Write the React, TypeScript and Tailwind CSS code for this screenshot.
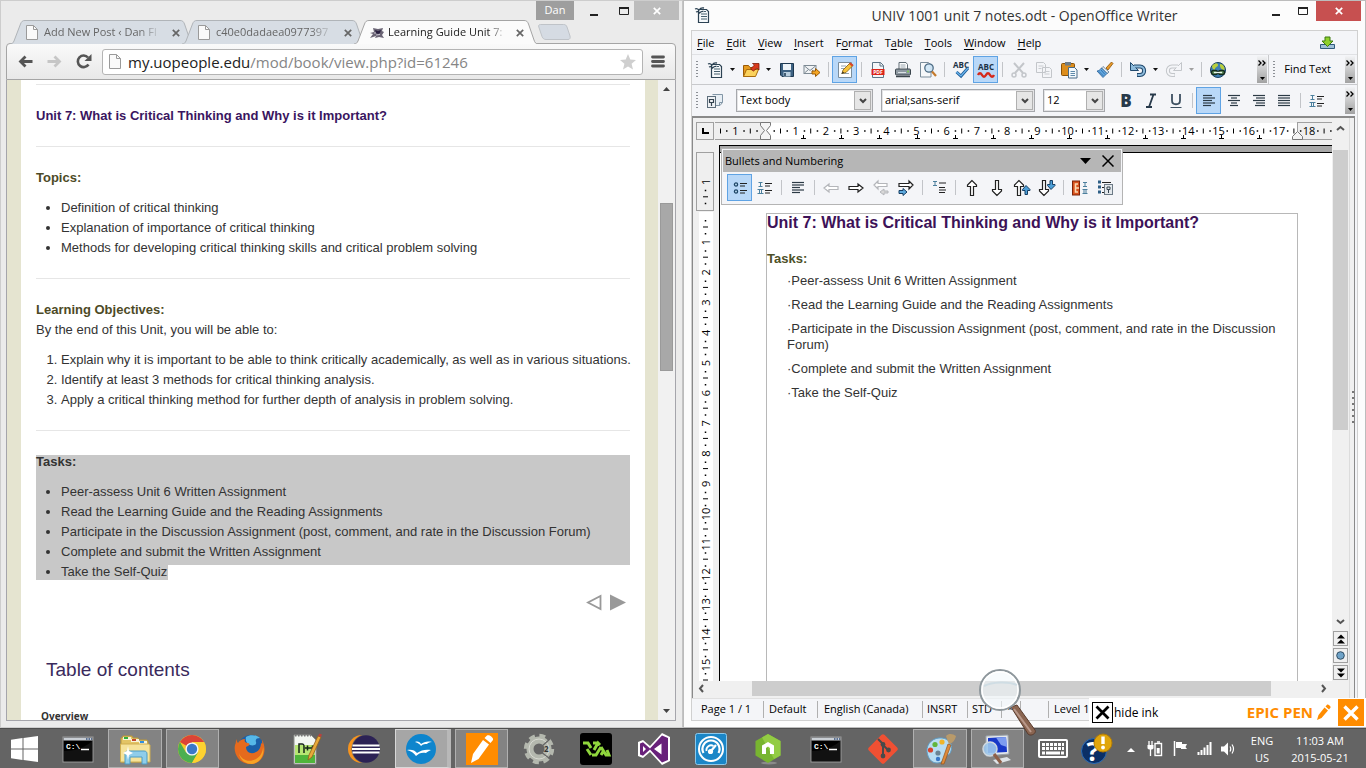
import type { ReactNode } from "react";

type Kids = { children?: ReactNode };

/* ---------- shared pieces ---------- */

function PageIcon() {
  return (
    <svg width="12" height="15" viewBox="0 0 12 15" className="shrink-0">
      <path d="M.5.5h7l4 4v10H.5z" fill="#fafafa" stroke="#9a9a9a" />
      <path d="M7.5.5v4h4" fill="none" stroke="#9a9a9a" />
    </svg>
  );
}

function Caret({ dim = false }: { dim?: boolean }) {
  return (
    <button aria-label="More options" className="flex h-[27px] w-[11px] shrink-0 items-center justify-center">
      <svg width="5" height="3">
        <path d="M0 0h5L2.5 3z" fill={dim ? "#a0a0a0" : "#111"} />
      </svg>
    </button>
  );
}

function Sep() {
  return <span className="flex h-[15px] w-2 shrink-0 justify-center before:w-px before:bg-[#c2c4c8]" />;
}

function Grip() {
  return (
    <svg width="2" height="18" className="ml-1 shrink-0">
      <path d="M1 0v18" stroke="#8c9096" strokeWidth="2" strokeDasharray="1 2" />
    </svg>
  );
}

function Tool({ label, on = false, children }: Kids & { label: string; on?: boolean }) {
  return (
    <button
      aria-label={label}
      className={
        on
          ? "flex h-[27px] w-[25px] shrink-0 items-center justify-center border border-[#5fa3e4] bg-[#b9d8f8]"
          : "flex h-[27px] w-[25px] shrink-0 items-center justify-center"
      }
    >
      <svg width="18" height="18" viewBox="0 0 18 18" className="shrink-0">
        {children}
      </svg>
    </button>
  );
}

function Overflow() {
  return (
    <button
      aria-label="More tools"
      className="flex h-[27px] w-[10px] shrink-0 flex-col items-center justify-between bg-linear-to-b from-[#f2f3f5] to-[#a2a2a2] pt-1 pb-[3px]"
    >
      <svg width="8" height="6">
        <path d="M.5 .5l2.5 2.5-2.5 2.5M4.5 .5l2.5 2.5-2.5 2.5" fill="none" stroke="#000" strokeWidth="1.3" />
      </svg>
      <svg width="5" height="3">
        <path d="M0 0h5L2.5 3z" />
      </svg>
    </button>
  );
}

/* ---------- browser ---------- */

function Tab({ title, active = false, icon }: { title: string; active?: boolean; icon: ReactNode }) {
  return (
    <div className={active ? "relative z-10 -mr-3 h-6 w-[184px]" : "relative -mr-3 h-6 w-[184px]"}>
      <svg className="absolute inset-0" width="184" height="24">
        <path
          d="M0 24c2 0 3-1 4-3L10.5 4C11.5 1.5 12.5.5 15 .5h155c2.5 0 3.5 1 4.500 3.500L180 20c.8 2.500 2 4 4 4"
          fill={active ? "#fbfbfb" : "#d7dde4"}
          stroke={active ? "#a4a4a4" : "#b0b4b8"}
        />
      </svg>
      <div className="relative flex h-6 items-center pt-px pr-[14px] pl-4">
        <span className="flex w-[18px] shrink-0">{icon}</span>
        <span
          className={
            active
              ? "w-[118px] overflow-hidden text-[11px] whitespace-nowrap text-[#222] [mask-image:linear-gradient(90deg,#000_85%,transparent)]"
              : "w-[118px] overflow-hidden text-[11px] whitespace-nowrap text-[#666] [mask-image:linear-gradient(90deg,#000_80%,transparent)]"
          }
        >
          {title}
        </span>
        <button aria-label="Close tab" className="ml-auto flex">
          <svg width="8" height="8">
            <path d="M.8.8l6.400 6.400M7.200.8L.8 7.200" stroke="#666" strokeWidth="1.700" />
          </svg>
        </button>
      </div>
    </div>
  );
}

function Rule() {
  return <hr className="h-[2px] border-0 border-t border-[#e6e6e6]" />;
}

function Browser() {
  return (
    <section className="flex min-h-0 min-w-0 flex-col border border-[#cdcdcd] border-r-[#c4c4c4] bg-[#ebebeb] pr-[6px] pb-[6px] pl-[5px]">
      <header>
        <div className="flex h-[19px] justify-end">
          <span className="flex w-[38px] items-center justify-center bg-[#9e9e9e] text-[11px] text-white">Dan</span>
          <button aria-label="Minimize" className="flex w-10 items-center justify-center pt-2">
            <svg width="8" height="2">
              <path d="M0 1h8" stroke="#222" strokeWidth="2" />
            </svg>
          </button>
          <button aria-label="Maximize" className="flex w-5 items-center justify-center">
            <svg width="10" height="8">
              <path d="M.5 1v6.500h9V1" fill="none" stroke="#222" />
              <path d="M0 1h10" stroke="#222" strokeWidth="2" />
            </svg>
          </button>
          <button aria-label="Close" className="-mr-[3px] flex w-[45px] items-center justify-center bg-[#bcbcbc]">
            <svg width="8" height="8">
              <path d="M.8.8l6.400 6.400M7.200.8L.8 7.200" stroke="#fff" strokeWidth="1.700" />
            </svg>
          </button>
        </div>
        <div className="relative z-10 -mb-px flex pl-1">
          <Tab title="Add New Post ‹ Dan Fl" icon={<PageIcon />} />
          <Tab title="c40e0dadaea0977397" icon={<PageIcon />} />
          <Tab
            title="Learning Guide Unit 7:"
            active
            icon={
              <svg width="15" height="12" viewBox="0 0 15 12">
                <path d="M3 1l5 1 5-1-1 3 2 1-2 3 2 3-5-1-4 1 1-2-6 2 3-4-3-1 4-1z" fill="#6a6474" />
                <path d="M5 3l3 1 3-1-1 3-2 1-2-1z" fill="#2a2140" />
                <path d="M6 8l4-.5M4 6h2" stroke="#c9c4d2" />
              </svg>
            }
          />
          <button aria-label="New tab" className="ml-3 flex items-center pb-px">
            <svg width="33" height="16">
              <path d="M2.500.5h23c2 0 2.700.6 3.500 2.500l3 9c.6 2-.2 3.500-2 3.500H8c-2 0-3-.8-4-3L.8 3C.3 1.500.8.5 2.500.5z" fill="#d5dbe3" stroke="#bfc3c8" />
            </svg>
          </button>
        </div>
      </header>
      <div className="flex h-[37px] shrink-0 items-center rounded-t-[4px] border border-[#a5a5a5] bg-linear-to-b from-[#fafafa] to-[#e8e8e8] pr-[10px] pl-[11px]">
        <button aria-label="Back" className="flex w-[29px]">
          <svg width="15" height="13">
            <path d="M14.500 6.500H3M7.500 1.500l-5 5 5 5" fill="none" stroke="#555" strokeWidth="2.800" />
          </svg>
        </button>
        <button aria-label="Forward" className="flex w-[29px]">
          <svg width="15" height="13">
            <path d="M.5 6.500H12M7.500 1.500l5 5-5 5" fill="none" stroke="#c6c6c6" strokeWidth="2.800" />
          </svg>
        </button>
        <button aria-label="Reload" className="flex w-[26px]">
          <svg width="16" height="15">
            <path d="M12.500 10.500A5.800 5.800 0 1 1 12 3.500" fill="none" stroke="#555" strokeWidth="2.600" />
            <path d="M15.500 0v7H8.500z" fill="#555" />
          </svg>
        </button>
        <div className="flex h-[26px] flex-1 items-center rounded-[3px] border border-[#b4b4b4] bg-white px-[6px]">
          <PageIcon />
          <div className="ml-[7px] flex-1 text-[15px] leading-6 whitespace-nowrap text-[#858585]">
            <span className="text-[#222]">my.uopeople.edu</span>/mod/book/view.php?id=61246
          </div>
          <button aria-label="Bookmark this page" className="flex">
            <svg width="16" height="16" viewBox="0 0 16 16">
              <path d="M8 0l2.300 5.500 5.700.5-4.400 3.800L13 15.600 8 12.500l-5 3.100 1.400-5.800L0 6l5.700-.5z" fill="#cfcfcf" />
            </svg>
          </button>
        </div>
        <button aria-label="Menu" className="ml-2 flex">
          <svg width="14" height="13">
            <path d="M1.500 2h11M1.500 6.500h11M1.500 11h11" stroke="#555" strokeWidth="2.800" strokeLinecap="round" />
          </svg>
        </button>
      </div>
      <div className="flex min-h-0 flex-1 border border-t-0 border-[#a5a5ab]">
        <main className="min-w-0 flex-1 overflow-hidden border-r-[13px] border-l-[14px] border-[#e5e4d0] bg-white px-[15px] pt-1 font-['Liberation_Sans',sans-serif] text-[13px] leading-5 text-[#333]">
          <Rule />
          <h3 className="my-5 font-bold text-[#3a1560]">Unit 7: What is Critical Thinking and Why is it Important?</h3>
          <Rule />
          <h4 className="mt-5 mb-[10px] font-bold text-[#4d4a26]">Topics:</h4>
          <ul className="mb-5 list-disc pl-[25px]">
            <li>Definition of critical thinking</li>
            <li>Explanation of importance of critical thinking</li>
            <li>Methods for developing critical thinking skills and critical problem solving</li>
          </ul>
          <Rule />
          <h4 className="mt-5 font-bold text-[#4d4a26]">Learning Objectives:</h4>
          <p className="mb-[10px]">By the end of this Unit, you will be able to:</p>
          <ol className="mb-5 list-decimal pl-[25px] whitespace-nowrap">
            <li>Explain why it is important to be able to think critically academically, as well as in various situations.</li>
            <li>Identify at least 3 methods for critical thinking analysis.</li>
            <li>Apply a critical thinking method for further depth of analysis in problem solving.</li>
          </ol>
          <Rule />
          <div className="mt-[23px] bg-[linear-gradient(#c8c8c8,#c8c8c8),linear-gradient(#c8c8c8,#c8c8c8)] bg-[length:100%_110px,132px_125px] bg-no-repeat">
            <h4 className="h-[17px] leading-[14px] font-bold">Tasks:</h4>
            <ul className="list-disc pt-[10px] pl-[25px]">
              <li>Peer-assess Unit 6 Written Assignment</li>
              <li>Read the Learning Guide and the Reading Assignments</li>
              <li>Participate in the Discussion Assignment (post, comment, and rate in the Discussion Forum)</li>
              <li>Complete and submit the Written Assignment</li>
              <li>Take the Self-Quiz</li>
            </ul>
          </div>
          <nav className="mt-3 flex justify-end gap-2 pr-1">
            <a href="#previous" aria-label="Previous">
              <svg width="16" height="17">
                <path d="M14.500 2v13L2 8.500z" fill="#fff" stroke="#999" strokeWidth="1.800" />
              </svg>
            </a>
            <a href="#next" aria-label="Next">
              <svg width="16" height="17">
                <path d="M0 .5v16l16-8z" fill="#999" />
              </svg>
            </a>
          </nav>
          <h2 className="mt-[47px] pl-[10px] text-[19px] leading-6 text-[#3a2a5c]">Table of contents</h2>
          <p className="mt-6 pl-[5px] font-['Open_Sans',sans-serif] text-[10px] font-bold">Overview</p>
        </main>
        <div className="flex w-[17px] flex-col items-center bg-[#f1f1f1] pt-[7px] pb-[7px]">
          <svg width="7" height="4">
            <path d="M0 4h7L3.500 0z" fill="#444" />
          </svg>
          <span className="mt-[112px] h-[168px] w-[13px] border border-[#9a9a9a] bg-[#a8a8a8]" />
          <svg width="7" height="4" className="mt-auto">
            <path d="M0 0h7L3.500 4z" fill="#444" />
          </svg>
        </div>
      </div>
    </section>
  );
}

/* ---------- writer ---------- */

function WriterLogo() {
  return (
    <>
      <path d="M5.500 3.500h8l2 2v11h-10z" fill="#f6f9fb" stroke="#2c4253" strokeWidth="1.200" />
      <path d="M8 8h6M8 10.500h6M8 13h6M11 5.500h2" stroke="#46606f" />
      <path d="M2 3c2-1 3 0 4 1 1-1.500 3-2.500 5-2M3 6c2-1 3 0 3.500 1 1-1 2-2 4-1.500" fill="none" stroke="#2c4253" strokeWidth="1.300" />
    </>
  );
}

function Lines({ rows }: { rows: [number, number][] }) {
  return (
    <>
      {rows.map(([a, b], i) => (
        <path key={i} d={`M${a} ${3.5 + i * 2.5}H${b}`} stroke="#2b3a45" strokeWidth="1.2" />
      ))}
    </>
  );
}

function NumberList({ bullets = false }: { bullets?: boolean }) {
  return (
    <>
      <path d="M9 4.500h7M9 7h5M9 11.500h7M9 14h5" stroke="#222" strokeWidth="1.200" />
      {bullets ? (
        <>
          <circle cx="5" cy="5.500" r="1.600" fill="#bfe0f5" stroke="#1e4566" strokeWidth="1.300" />
          <circle cx="5" cy="12.500" r="1.600" fill="#bfe0f5" stroke="#1e4566" strokeWidth="1.300" />
        </>
      ) : (
        <path d="M2.500 3.500h4M4.500 3.500v4M2.500 7.500h4M1.500 10.500h6M3.500 10.500v4M5.500 10.500v4M1.500 14.500h6" stroke="#4b7f9d" />
      )}
    </>
  );
}

const ARROW = "M2 9l5-4v2.500h9v3H7V13z";

function Combo({ label, value, className }: { label: string; value: string; className: string }) {
  return (
    <div className={`relative h-[23px] shrink-0 ${className}`}>
      <select
        aria-label={label}
        className="block size-full appearance-none border border-[#a6a8ac] bg-white pl-[3px] text-[11px] text-black shadow-[inset_0_0_0_1px_#e4e4e6]"
      >
        <option>{value}</option>
      </select>
      <span className="pointer-events-none absolute top-[2px] right-[2px] bottom-[2px] flex w-[17px] items-center justify-center border border-[#b0b0b0] bg-[#e6e6e6]">
        <svg width="8" height="6">
          <path d="M1 1l3 3 3-3" fill="none" stroke="#444" strokeWidth="2" />
        </svg>
      </span>
    </div>
  );
}

const MENUS = [
  ["", "F", "ile"],
  ["", "E", "dit"],
  ["", "V", "iew"],
  ["", "I", "nsert"],
  ["F", "o", "rmat"],
  ["T", "a", "ble"],
  ["", "T", "ools"],
  ["", "W", "indow"],
  ["", "H", "elp"],
];

const CM = 30.2;

function HorizontalRuler() {
  const marks = Array.from({ length: 20 }, (_, i) => i - 1);
  return (
    <svg className="h-7 w-full font-['Open_Sans',sans-serif] text-[11px]">
      <rect x="0" y="6" width="100%" height="16" fill="#fff" />
      <path d="M0 5.500h50M0 22.500h50" stroke="#a0a0a0" />
      <rect x="0" y="6" width="50" height="16" fill="#efefef" />
      <rect x="582.500" y="5.500" width="60" height="17" fill="#efefef" stroke="#a0a0a0" />
      {marks.map((n) => {
        const x = 50.5 + n * CM;
        return (
          <g key={n}>
            {n !== 0 && (
              <text x={x} y="18" textAnchor="middle">
                {Math.abs(n)}
              </text>
            )}
            <path d={`M${x + 8} 14h1.500M${x + 21} 14h1.500`} stroke="#000" strokeWidth="1.5" />
            <path d={`M${x + 15} 11.500v5`} stroke="#000" />
          </g>
        );
      })}
      <path d="M5.500 11.500v5" stroke="#000" />
      <path d="M11 14h1.500" stroke="#000" strokeWidth="1.500" />
      {Array.from({ length: 13 }, (_, i) => 88.5 + i * 38).map((x) => (
        <path key={x} d={`M${x} 18v4M${x - 2.5} 21.500h5`} stroke="#000" />
      ))}
      <path d="M45.500 5.500h10v3l-4 5 4 5v4h-10v-4l4-5-4-5z" fill="#f4f4f4" stroke="#777" />
      <path d="M577.500 22.500h10v-3l-5-5-5 5z" fill="#f4f4f4" stroke="#777" />
    </svg>
  );
}

function VerticalRuler() {
  const marks = Array.from({ length: 17 }, (_, i) => i - 1);
  return (
    <svg className="h-full w-[26px] shrink-0 font-['Open_Sans',sans-serif] text-[11px]">
      <rect x="6" y="67" width="14" height="100%" fill="#fff" />
      <rect x="3.500" y="7.500" width="17" height="58" fill="#efefef" stroke="#a0a0a0" />
      {marks.map((n) => {
        const y = 67 + n * CM;
        return (
          <g key={n}>
            {n !== 0 && (
              <text textAnchor="middle" transform={`translate(17 ${y}) rotate(-90)`}>
                {Math.abs(n)}
              </text>
            )}
            <path d={`M12.500 ${y + 8}v1.500M12.500 ${y + 21}v1.500`} stroke="#000" strokeWidth="1.5" />
            <path d={`M10 ${y + 15}h5`} stroke="#000" />
          </g>
        );
      })}
    </svg>
  );
}

function BulletsPanel() {
  return (
    <div className="absolute top-[2px] left-[1px] w-[402px] border border-[#b4b4b4] bg-[#f4f5f8] p-px">
      <div className="flex h-[22px] items-center bg-[#b6b6b6] pr-[7px] pl-[2px] text-[11px]">
        <span className="flex-1">Bullets and Numbering</span>
        <button aria-label="Panel options" className="mr-[11px] flex">
          <svg width="11" height="6">
            <path d="M0 0h11L5.500 6z" />
          </svg>
        </button>
        <button aria-label="Close panel" className="flex">
          <svg width="12" height="12">
            <path d="M.5.5l11 11M11.500.5l-11 11" stroke="#000" strokeWidth="1.500" />
          </svg>
        </button>
      </div>
      <div className="flex h-[31px] items-center pl-1">
        <Tool label="Bullets on/off" on>
          <NumberList bullets />
        </Tool>
        <Tool label="Numbering on/off">
          <NumberList />
        </Tool>
        <Sep />
        <Tool label="Numbering off">
          <Lines rows={[[3, 15], [3, 15], [3, 11], [3, 15], [3, 11]]} />
        </Tool>
        <Sep />
        <Tool label="Promote one level">
          <path d={ARROW} fill="#fff" stroke="#b4b6ba" strokeWidth="1.200" />
        </Tool>
        <Tool label="Demote one level">
          <path d={ARROW} transform="matrix(-1 0 0 1 18 0)" fill="#fff" stroke="#222" strokeWidth="1.200" />
        </Tool>
        <Tool label="Promote with subpoints">
          <path d="M2 6l4-4v2.500h9v3H6V10z" fill="#fff" stroke="#b4b6ba" strokeWidth="1.200" />
          <path d="M8 13l4-3v2h4v2h-4v2z" fill="#d8d8d8" stroke="#b4b6ba" />
        </Tool>
        <Tool label="Demote with subpoints">
          <path d="M16 6l-4-4v2.500H2v3h10V10z" fill="#fff" stroke="#222" strokeWidth="1.200" />
          <path d="M10 13l-4-3.500v2H2v3h4v2z" fill="#5da9dd" stroke="#163e63" />
        </Tool>
        <Sep />
        <Tool label="Insert unnumbered entry">
          <path d="M3 2.500h4M5 2.500v4M3 6.500h4" stroke="#4b7f9d" />
          <path d="M9 4h7M9 8.500h6M9 11h7M9 13.500h6" stroke="#222" strokeWidth="1.200" />
        </Tool>
        <Sep />
        <Tool label="Move up">
          <path d="M9 1.500L4.500 6v1.500H7.500v9h3v-9h3V6z" fill="#fff" stroke="#222" strokeWidth="1.200" />
        </Tool>
        <Tool label="Move down">
          <path d="M9 16.500L4.500 12v-1.500H7.500v-9h3v9h3V12z" fill="#fff" stroke="#222" strokeWidth="1.200" />
        </Tool>
        <Tool label="Move up with subpoints">
          <path d="M6 1.500L1.500 6v1.500H4.500v9h3v-9h3V6z" fill="#fff" stroke="#222" strokeWidth="1.200" />
          <path d="M13 6.500l-3.500 4v1h2.500v4h2.500v-4H17v-1z" fill="#4c9fd8" stroke="#163e63" />
        </Tool>
        <Tool label="Move down with subpoints">
          <path d="M6 16.500L1.500 12v-1.500H4.500v-9h3v9h3V12z" fill="#fff" stroke="#222" strokeWidth="1.200" />
          <path d="M13 10.500l-3.500-4v-1h2.500v-4h2.500v4H17v1z" fill="#4c9fd8" stroke="#163e63" />
        </Tool>
        <Sep />
        <Tool label="Restart numbering">
          <rect x="1.500" y="2" width="7" height="14" fill="#d9531e" stroke="#7c2408" />
          <path d="M7 5H4.500v8H7M5 9h3" fill="none" stroke="#fbd9b0" strokeWidth="1.600" />
          <path d="M12 3.500h4M14 3.500v4M12 7.500h4M11.500 10.500h5M13 10.500v4M15 10.500v4M11.500 14.500h5" stroke="#4b7f9d" />
        </Tool>
        <Tool label="Bullets and numbering">
          <path d="M6 3.500h9M6 8.500h3M6 13.500h3" stroke="#222" strokeWidth="1.200" />
          <path d="M3.500 1.500v14" stroke="#2d5f86" strokeWidth="3" strokeDasharray="3 2" />
          <rect x="8.500" y="5.500" width="8" height="10" fill="#e3e8ec" stroke="#6c7a86" />
          <path d="M11 8h3v2.500h-3zM12.500 10.500V14" fill="none" stroke="#33424f" />
        </Tool>
      </div>
    </div>
  );
}

function StandardToolbar() {
  return (
    <div className="flex h-[30px] shrink-0 items-center border-b border-[#c8c9cc]">
      <Grip />
      <span className="w-1 shrink-0" />
      <Tool label="New">
        <WriterLogo />
      </Tool>
      <Caret />
      <Tool label="Open">
        <path d="M1.500 15.500V4.500h5l1.500 2h3V15.500z" fill="#e69b1e" stroke="#9a5a06" />
        <path d="M1.500 15.500l3-7h12l-3 7z" fill="#fbd25c" stroke="#a86b0c" />
        <path d="M8.500 8l4-4-2-1.500H17V9l-2-2-3.500 3z" fill="#d83a1c" stroke="#7e1b08" strokeWidth=".8" />
      </Tool>
      <Caret />
      <Tool label="Save">
        <path d="M2.500 2.500h13v13H4l-1.500-1.500z" fill="#3d6283" stroke="#1d3850" />
        <rect x="5" y="3" width="8" height="6" fill="#eef4f8" />
        <rect x="5.500" y="11" width="7" height="4.500" fill="#b9cfdf" />
        <path d="M7 12v3" stroke="#1d3850" strokeWidth="1.500" />
      </Tool>
      <Tool label="Send by e-mail">
        <rect x="1" y="4.500" width="12" height="8" fill="#f1f3f5" stroke="#7d8a94" />
        <path d="M1.500 5l5.500 4.500L12.500 5M1.500 12l4-3.500M12.500 12l-4-3.500" fill="none" stroke="#7d8a94" />
        <path d="M9 10h3.500V7.500L17 11.500l-4.500 4V13H9z" fill="#f5a623" stroke="#9a5a06" />
      </Tool>
      <Sep />
      <Tool label="Edit file" on>
        <path d="M2.500 1.500h13v15h-13z" fill="#fff" stroke="#7b8d9b" />
        <path d="M5 5h5M5 7.500h4M5 12.500h8" stroke="#93a3af" />
        <path d="M6 12.500l1-3.500L14 2l3 2.500-7 7z" fill="#f8c33c" stroke="#7c5a10" strokeWidth=".8" />
        <path d="M13 3l1.500-1.500L17.500 4 16 5.500z" fill="#d9442a" />
        <path d="M6 12.500l.7-2 1.400 1.200z" fill="#222" />
      </Tool>
      <Sep />
      <Tool label="Export as PDF">
        <path d="M3.500 1.500h8l3 3v12h-11z" fill="#f4f6f8" stroke="#5c7485" />
        <path d="M11 1.500v3.500h3.500" fill="none" stroke="#5c7485" />
        <rect x="2.500" y="8" width="13" height="6" fill="#dc2418" />
        <text x="9" y="13" textAnchor="middle" fill="#fff" className="text-[5px] font-bold">
          PDF
        </text>
      </Tool>
      <Tool label="Print">
        <path d="M5 8V1.500h7l1.500 2V8" fill="#fff" stroke="#5f6b74" />
        <path d="M6.500 4h5M6.500 6h5" stroke="#9aa6af" />
        <rect x="1.500" y="8" width="15" height="6" rx="1" fill="#8f9aa3" stroke="#3b454d" />
        <path d="M2 15.500h14" stroke="#3b454d" strokeWidth="1.500" />
        <path d="M4 11.500h8" stroke="#dbe1e5" />
        <circle cx="14" cy="10.500" r=".9" fill="#7fd24a" />
      </Tool>
      <Tool label="Page preview">
        <path d="M1.500 1.500h8l2.500 2.500v12H1.500z" fill="#f6f8fa" stroke="#7b8d9b" />
        <circle cx="10" cy="7" r="4.200" fill="#cfe6f6" fillOpacity=".9" stroke="#4c6b84" strokeWidth="1.300" />
        <path d="M13 10.500l4 4.500" stroke="#c47a2c" strokeWidth="2.200" />
      </Tool>
      <Sep />
      <Tool label="Spelling and grammar">
        <text x="9" y="7" textAnchor="middle" fill="#1c3247" className="text-[8px] font-bold">
          ABC
        </text>
        <path d="M4.500 11l4.500 4 7-8" fill="none" stroke="#1f5f9a" strokeWidth="3" />
        <path d="M4.500 11l4.500 4 7-8" fill="none" stroke="#6cb6ee" strokeWidth="1.200" />
      </Tool>
      <Tool label="AutoSpellcheck" on>
        <text x="9" y="9" textAnchor="middle" fill="#1c3247" className="text-[8px] font-bold">
          ABC
        </text>
        <path d="M1 14q2-3.500 4 0t4 0 4 0 4 0" fill="none" stroke="#d5281b" strokeWidth="2.400" />
      </Tool>
      <Sep />
      <Tool label="Cut">
        <path d="M4 2l9 10M14 2L5 12" stroke="#c3c6ca" strokeWidth="2" />
        <circle cx="4" cy="14" r="2" fill="none" stroke="#c3c6ca" strokeWidth="1.500" />
        <circle cx="14" cy="14" r="2" fill="none" stroke="#c3c6ca" strokeWidth="1.500" />
      </Tool>
      <Tool label="Copy">
        <path d="M1.500 1.500h7l2 2v8h-9zM7.500 6.500h7l2 2v8h-9z" fill="#f4f5f8" stroke="#c3c6ca" />
        <path d="M3.500 5h5M3.500 7.500h3M9.500 10.500h5M9.500 13h5" stroke="#c9ccd0" />
      </Tool>
      <Tool label="Paste">
        <rect x="1.500" y="2.500" width="13" height="12" rx="1" fill="#dc8d1c" stroke="#8a5207" />
        <rect x="5" y="1" width="6" height="3.500" fill="#6f7d88" />
        <path d="M8.500 6.500h6l2.500 2.500v8H8.500z" fill="#f3f8fc" stroke="#496b87" />
        <path d="M10.500 10.500h4.500M10.500 12.500h4.500M10.500 14.500h4.500" stroke="#5e89aa" />
      </Tool>
      <Caret />
      <Tool label="Format paintbrush">
        <path d="M10 7l5.500-6L17 2.500 12 9z" fill="#e89a2a" stroke="#8a5207" strokeWidth=".8" />
        <path d="M7 5.500l6 5.500-2 1.500L5.500 7z" fill="#e9eef2" stroke="#53708a" strokeWidth=".8" />
        <path d="M5.500 7l5.500 5.500-4 4L1 10c1.500 0 3-1 4.500-3z" fill="#63a9e3" stroke="#245d94" strokeWidth=".8" />
        <path d="M3 10.500l4.500 4.500M5 9l4 4.500" stroke="#245d94" strokeWidth=".7" />
      </Tool>
      <Sep />
      <Tool label="Undo">
        <path d="M5 5.500h6c5.500 0 5.500 8.500 0 8.500H8" fill="none" stroke="#21496d" strokeWidth="4" />
        <path d="M1.500 1.500v8h8z" fill="#8dbbdc" stroke="#21496d" />
        <path d="M5 5.500h6c5.500 0 5.500 8.500 0 8.500H8.500" fill="none" stroke="#8dbbdc" strokeWidth="2" />
      </Tool>
      <Caret />
      <Tool label="Redo">
        <path d="M13 5.500H7c-5.500 0-5.500 8.500 0 8.500h3" fill="none" stroke="#c3c6ca" strokeWidth="4" />
        <path d="M16.500 1.500v8h-8z" fill="#f4f5f8" stroke="#c3c6ca" />
        <path d="M13 5.500H7c-5.500 0-5.500 8.500 0 8.500h2.500" fill="none" stroke="#f4f5f8" strokeWidth="2" />
      </Tool>
      <Caret dim />
      <Sep />
      <Tool label="Hyperlink">
        <circle cx="9" cy="9" r="7.500" fill="#3e7fb4" stroke="#173f5f" />
        <path d="M3 5c3-4 6-3 6-1s-3 2-3 4-3 0-3-3zM11 3c3 0 5 3 4.500 6-3 0-5-3-4.500-6z" fill="#b9cf3c" />
        <rect x="2.500" y="9.500" width="6" height="4" rx="2" fill="#5f8f5a" stroke="#142b1f" strokeWidth="1.500" />
        <rect x="9.500" y="9.500" width="6" height="4" rx="2" fill="#5f8f5a" stroke="#142b1f" strokeWidth="1.500" />
        <path d="M5 11.500h8" stroke="#eaf5ee" strokeWidth="1.300" />
      </Tool>
      <span className="ml-auto" />
      <Overflow />
      <span className="ml-px h-full w-px bg-[#c8c9cc]" />
      <Grip />
      <button className="ml-[9px] text-[11px] whitespace-nowrap">Find Text</button>
      <span className="ml-[14px]" />
      <Overflow />
      <span className="w-[2px]" />
    </div>
  );
}

function FormatToolbar() {
  return (
    <div className="flex h-[31px] shrink-0 items-center">
      <Grip />
      <span className="w-1" />
      <Tool label="Styles and formatting">
        <path d="M6.500 2.500h10v8l-2.500 3h-4" fill="#e7eef4" stroke="#8296a6" />
        <path d="M16.500 10.500H13.500v3" fill="none" stroke="#8296a6" />
        <rect x="1.500" y="4.500" width="8" height="11" fill="#eef1f4" stroke="#5c6d7b" />
        <path d="M3.500 7.500h4v3h-4zM5.500 10.500V14" fill="none" stroke="#33424f" strokeWidth="1.200" />
      </Tool>
      <span className="w-[9px]" />
      <Combo label="Apply style" value="Text body" className="w-[137px]" />
      <span className="w-2" />
      <Combo label="Font name" value="arial;sans-serif" className="w-[154px]" />
      <span className="w-2" />
      <Combo label="Font size" value="12" className="w-[62px]" />
      <span className="w-2" />
      <Tool label="Bold">
        <text x="9" y="15" textAnchor="middle" fill="#27394a" className="text-[17px] font-extrabold">
          B
        </text>
      </Tool>
      <Tool label="Italic">
        <path d="M8 2.500h6M4 15h6M11.500 2.500L7 15" stroke="#27394a" strokeWidth="1.800" />
      </Tool>
      <Tool label="Underline">
        <path d="M5 2v6.500c0 5 8 5 8 0V2" fill="none" stroke="#3c4f60" strokeWidth="1.800" />
        <path d="M3.500 15.500h11" stroke="#3c4f60" />
      </Tool>
      <Sep />
      <Tool label="Align left" on>
        <Lines rows={[[3, 12], [3, 15], [3, 12], [3, 15], [3, 11]]} />
      </Tool>
      <Tool label="Centre">
        <Lines rows={[[3, 15], [6, 12], [3, 15], [6, 12], [5, 13]]} />
      </Tool>
      <Tool label="Align right">
        <Lines rows={[[3, 15], [6, 15], [3, 15], [6, 15], [5, 15]]} />
      </Tool>
      <Tool label="Justified">
        <Lines rows={[[3, 15], [3, 15], [3, 15], [3, 15], [3, 15]]} />
      </Tool>
      <Sep />
      <Tool label="Numbering">
        <NumberList />
      </Tool>
      <span className="ml-auto" />
      <Overflow />
      <span className="w-[2px]" />
    </div>
  );
}

function Chevron({ d }: { d: string }) {
  return (
    <svg width="9" height="9" viewBox="0 0 9 9">
      <path d={d} fill="none" stroke="#555" strokeWidth="2" />
    </svg>
  );
}

function Writer() {
  const status = "flex h-[17px] shrink-0 items-center border-[#b0b0b0]";
  return (
    <section className="flex min-h-0 min-w-0 flex-col border border-[#bcbcbc] bg-[#fcfcfc] px-[7px] pb-[6px]">
      <header className="-mr-[3px] flex h-[29px] shrink-0">
        <svg width="18" height="18" viewBox="0 0 18 18" className="mt-[5px] ml-[2px] shrink-0">
          <WriterLogo />
        </svg>
        <h1 className="flex-1 pt-1 pl-[76px] text-center text-[14px] leading-[21px] whitespace-nowrap text-[#333]">
          UNIV 1001 unit 7 notes.odt - OpenOffice Writer
        </h1>
        <div className="flex h-5 shrink-0">
          <button aria-label="Minimize" className="flex w-7 items-center justify-center pt-2">
            <svg width="8" height="2">
              <path d="M0 1h8" stroke="#222" strokeWidth="2" />
            </svg>
          </button>
          <button aria-label="Maximize" className="flex w-[26px] items-center justify-center">
            <svg width="10" height="8">
              <path d="M.5 1v6.500h9V1" fill="none" stroke="#222" />
              <path d="M0 1h10" stroke="#222" strokeWidth="2" />
            </svg>
          </button>
          <button aria-label="Close" className="flex w-[45px] items-center justify-center bg-[#c75050]">
            <svg width="8" height="8">
              <path d="M.8.8l6.400 6.400M7.200.8L.8 7.200" stroke="#fff" strokeWidth="1.700" />
            </svg>
          </button>
        </div>
      </header>
      <div className="flex min-h-0 flex-1 flex-col border border-[#d0d0d0] bg-[#f4f5f8]">
        <nav className="flex h-6 shrink-0 items-center gap-3 border-b border-[#e0e1e4] pt-px pr-[21px] pl-[5px] text-[11px]">
          {MENUS.map(([a, u, b]) => (
            <button key={u + b}>
              {a}
              <u className="underline-offset-2">{u}</u>
              {b}
            </button>
          ))}
          <button aria-label="Check for updates" className="ml-auto">
            <svg width="17" height="14">
              <path d="M1.500 8.500h14v4h-14z" fill="#9fc0d8" stroke="#2f5a7c" />
              <path d="M6 1h5v4h3L8.500 10.500 3 5h3z" fill="#8ed02c" stroke="#3c7a10" />
            </svg>
          </button>
        </nav>
        <StandardToolbar />
        <FormatToolbar />
        <div className="mr-[2px] flex min-h-0 flex-1 border-t-2 border-r border-l border-[#8a8a8a] bg-[#f0f0f0]">
          <div className="flex min-w-0 flex-1 flex-col">
            <div className="flex h-[27px] shrink-0">
              <button aria-label="Tab type" className="mt-1 ml-[3px] flex size-[18px] shrink-0 items-center justify-center border border-[#a0a0a0]">
                <svg width="7" height="6">
                  <path d="M1 0v5h6" fill="none" stroke="#000" strokeWidth="2" />
                </svg>
              </button>
              <div className="-mt-px ml-px min-w-0 flex-1">
                <HorizontalRuler />
              </div>
            </div>
            <div className="flex min-h-0 flex-1">
              <div className="flex w-[26px] shrink-0 overflow-hidden">
                <VerticalRuler />
              </div>
              <div className="relative min-w-0 flex-1 border-t border-l border-black bg-[#a8a8a8] pt-[6px]">
                <div className="h-full overflow-hidden border-t border-black bg-white pt-[60px] pr-[34px] pl-[46px] font-['Liberation_Sans',sans-serif] text-[13px] leading-4 text-[#333]">
                  <article className="h-full border border-b-0 border-[#b8b8b8] pr-5">
                    <h2 className="text-[16px] leading-[18px] font-bold text-[#3d1258]">
                      Unit 7: What is Critical Thinking and Why is it Important?
                    </h2>
                    <h3 className="mt-[19px] font-bold text-[#4d5028]">Tasks:</h3>
                    <ul className="mt-[6px] flex flex-col gap-2 pl-5">
                      {[
                        "Peer-assess Unit 6 Written Assignment",
                        "Read the Learning Guide and the Reading Assignments",
                        "Participate in the Discussion Assignment (post, comment, and rate in the Discussion Forum)",
                        "Complete and submit the Written Assignment",
                        "Take the Self-Quiz",
                      ].map((t) => (
                        <li key={t}>{`·${t}`}</li>
                      ))}
                    </ul>
                  </article>
                </div>
                <BulletsPanel />
              </div>
            </div>
            <div className="flex h-[17px] shrink-0 items-center pb-[2px]">
              <span className="flex w-[59px] pl-1">
                <Chevron d="M6 1L3 4.500 6 8" />
              </span>
              <span className="h-[15px] flex-1 bg-[#cdcdcd]" />
              <span className="flex w-[61px] justify-end pr-1">
                <Chevron d="M3 1l3 3.500L3 8" />
              </span>
            </div>
          </div>
          <div className="flex w-[17px] shrink-0 flex-col items-center">
            <span className="flex h-8 shrink-0 items-center pb-3">
              <Chevron d="M1 6l3.500-3L8 6" />
            </span>
            <span className="h-[280px] w-[15px] bg-[#cdcdcd]" />
            <span className="mt-auto mb-[5px]">
              <Chevron d="M1 3l3.500 3L8 3" />
            </span>
            <div className="mb-[18px] flex flex-col gap-[2px]">
              <button aria-label="Previous page" className="flex size-[15px] items-center justify-center border border-[#a0a0a0]">
                <svg width="8" height="10">
                  <path d="M0 4.500h8L4 .5zM0 9.500h8L4 5.500z" />
                </svg>
              </button>
              <button aria-label="Navigation" className="flex size-[15px] items-center justify-center border border-[#a0a0a0]">
                <svg width="9" height="9">
                  <circle cx="4.500" cy="4.500" r="3.800" fill="#6fa3c8" stroke="#2f4c62" />
                </svg>
              </button>
              <button aria-label="Next page" className="flex size-[15px] items-center justify-center border border-[#a0a0a0]">
                <svg width="8" height="10">
                  <path d="M0 .5h8L4 4.500zM0 5.500h8L4 9.500z" />
                </svg>
              </button>
            </div>
          </div>
          <div className="flex w-[5px] shrink-0 items-center justify-end border-l border-[#dcdcdc]">
            <svg width="2" height="34">
              <path d="M1 0v34" stroke="#777" strokeWidth="2" strokeDasharray="2 4" />
            </svg>
          </div>
        </div>
        <footer className="flex h-[22px] shrink-0 items-center overflow-hidden border-t border-[#e0e0e0] text-[11px] whitespace-nowrap">
          <span className={`${status} w-[71px] pl-[9px]`}>Page 1 / 1</span>
          <span className={`${status} w-[54px] border-l pl-[5px]`}>Default</span>
          <span className={`${status} w-[105px] border-l pl-[6px]`}>English (Canada)</span>
          <span className={`${status} w-[45px] border-l pl-1`}>INSRT</span>
          <span className={`${status} w-[34px] border-l pl-1`}>STD</span>
          <span className={`${status} w-[19px] border-l pl-[5px]`}>*</span>
          <span className={`${status} w-[28px] border-l`} />
          <span className={`${status} border-l pl-[5px]`}>Level 1</span>
        </footer>
      </div>
    </section>
  );
}

/* ---------- overlays ---------- */

function EpicPen() {
  return (
    <div className="absolute right-0 bottom-px flex h-[29px] w-[277px] items-center bg-white pl-[3px]">
      <label className="flex flex-1 items-center gap-px text-[12px]">
        <input type="checkbox" className="peer sr-only" defaultChecked />
        <svg width="21" height="21">
          <rect x=".5" y=".5" width="20" height="20" fill="#fff" stroke="#000" />
          <path d="M4.500 4.500l12 12M16.500 4.500l-12 12" stroke="#000" strokeWidth="2.800" />
        </svg>
        hide ink
      </label>
      <span className="text-[15px] font-bold text-[#ff8c00]">EPIC PEN</span>
      <svg width="14" height="17" viewBox="0 0 14 17" className="mr-[7px] ml-1">
        <path d="M0 16l1.500-5L7.500 3.500 11 6.500 4.500 14zM8.500 2.500L10 .8c.8-1 4.400 1.600 3.500 2.800L12 5.500z" fill="#ff8c00" />
      </svg>
      <button aria-label="Close Epic Pen" className="mr-[2px] flex h-[27px] w-[26px] items-center justify-center bg-[#ff8c00]">
        <svg width="16" height="16">
          <path d="M1.500 1.500l13 13M14.500 1.500l-13 13" stroke="#fff" strokeWidth="3.400" />
        </svg>
      </button>
    </div>
  );
}

function Magnifier() {
  return (
    <svg width="60" height="70" className="pointer-events-none absolute right-[328px] bottom-[31px]">
      <path d="M33 40l6-2 18 25c2 3-4 7-7 4z" fill="#8a6551" stroke="#5a3c2e" />
      <path d="M36 42l17 23" stroke="#b9988a" strokeWidth="2" />
      <circle cx="22" cy="23" r="20" fill="#f2f8fb" fillOpacity=".6" stroke="#8e979c" strokeWidth="2" />
      <circle cx="22" cy="23" r="18" fill="none" stroke="#fff" strokeWidth="1.500" />
      <path d="M6 19c8-4 24-5 33-1" fill="none" stroke="#cfdde4" strokeWidth="2" />
    </svg>
  );
}

/* ---------- taskbar ---------- */

function Icon({ children }: Kids) {
  return (
    <svg width="32" height="32" viewBox="0 0 32 32" className="shrink-0">
      {children}
    </svg>
  );
}

const Cmd = () => (
  <Icon>
    <rect x="1" y="4" width="30" height="25" fill="#000" stroke="#9a9a9a" />
    <rect x="1.500" y="4.500" width="29" height="3" fill="#c9ced4" />
    <path d="M24 6h1.500M26.500 6h1.500M29 6h1" stroke="#35507a" strokeWidth="1.500" />
    <path d="M2 18C14 18 24 14 30 8v20H2z" fill="#111" />
    <text x="4" y="16" fill="#fff" className="font-['Liberation_Mono',monospace] text-[8px] font-bold">
      C:\
    </text>
    <path d="M19 16.500h8" stroke="#fff" strokeWidth="1.500" />
  </Icon>
);

const APPS: { name: string; state: "" | "open" | "active"; icon: ReactNode }[] = [
  { name: "Command Prompt", state: "", icon: <Cmd /> },
  {
    name: "File Explorer",
    state: "open",
    icon: (
      <Icon>
        <path d="M3 5l1-2h9l1 2h5l1 2h8l1 2v20H2V5z" fill="#e3c465" stroke="#b8963a" />
        <path d="M4 4h8v3H4z" fill="#f7f3d8" />
        <path d="M5 5h4" stroke="#2fae3c" strokeWidth="2" />
        <path d="M12 6h8v3h-8z" fill="#f7f3d8" />
        <path d="M13 7h4" stroke="#c5462c" strokeWidth="2" />
        <path d="M20 8h8v3h-8z" fill="#f7f3d8" />
        <path d="M21 9h4" stroke="#2f8fe0" strokeWidth="2" />
        <path d="M1.500 11h28l1.500 1v17H1.500z" fill="#f6e39a" stroke="#cfae50" />
        <path d="M6 31V21c0-2 1-3 3-3h16c2 0 3 1 3 3v10h-5v-7H11v7z" fill="#8fcdea" stroke="#4d9cc4" />
        <path d="M9 13l1 5 4 2-4 2-1 5-1-5-4-2 4-2z" fill="#fff" />
      </Icon>
    ),
  },
  {
    name: "Google Chrome",
    state: "open",
    icon: (
      <Icon>
        <circle cx="16" cy="16" r="14" fill="#f6c82b" />
        <path d="M16 16L3.900 9A14 14 0 0 1 28.100 9H16z" fill="#db4437" />
        <path d="M3.900 9L10 19.500 16 16l6 3.500L16 30A14 14 0 0 1 3.900 9z" fill="#4caf50" />
        <path d="M28.100 9H16l6.500 10L16 30A14 14 0 0 0 28.100 9z" fill="#fdd231" />
        <circle cx="16" cy="16" r="6.600" fill="#f4f6f8" />
        <circle cx="16" cy="16" r="5.200" fill="#3b78c9" />
      </Icon>
    ),
  },
  {
    name: "Firefox",
    state: "",
    icon: (
      <Icon>
        <circle cx="17" cy="15" r="13" fill="#1b5fa8" />
        <path d="M12 4c4-3 11-2 14 1-3 0-5 1-4 4s-3 4-6 3-5-4-4-8z" fill="#56b8e8" />
        <path d="M2 6c1 2 1 3 2 4 2-3 4-4 7-4-1 2 0 4 3 4 3 1 1 3-2 4 0 5 5 8 10 5 3-1 5-5 5-9 2 2 1 0 1-3 5 8 3 22-10 24C6 32-1 21 1 12c1-2 1-4 1-6z" fill="#e66a1d" />
        <path d="M5 20c2 7 10 10 17 6 4-2 7-7 7-12 2 8-3 16-11 17C11 31 6 27 5 20z" fill="#f7a325" />
      </Icon>
    ),
  },
  {
    name: "Notepad++",
    state: "",
    icon: (
      <Icon>
        <path d="M3 2h17l5 5v24H3z" fill="#f4f7f2" stroke="#8c8f8a" />
        <path d="M4 12h20v18H4z" fill="#b6e672" />
        <path d="M4 22h20v8H4z" fill="#4fb53a" />
        <path d="M4 2.500h16" stroke="#777" strokeWidth="2" strokeDasharray="1.500 1.500" />
        <path d="M8 20v-9h3c2 0 2 1 2 3v6M14 15h5M16.500 12.500v5M19 15h5M21.500 12.500v5" fill="none" stroke="#16251a" strokeWidth="1.500" />
        <path d="M17 27l1-5L27 3l3 1-9 20z" fill="#e8a93a" stroke="#94611a" strokeWidth=".8" />
        <path d="M27 3l1.500-2.500L31 1.500 30 4z" fill="#b8423f" />
      </Icon>
    ),
  },
  {
    name: "Eclipse",
    state: "",
    icon: (
      <Icon>
        <circle cx="14" cy="16" r="14" fill="#f7941e" />
        <circle cx="18" cy="16" r="14.500" fill="#646464" />
        <circle cx="18" cy="16" r="13.800" fill="#2c2255" />
        <path d="M4.500 12.500h27M4 16h28M4.500 19.500h27" stroke="#fff" strokeWidth="1.800" />
      </Icon>
    ),
  },
  {
    name: "OpenOffice",
    state: "active",
    icon: (
      <Icon>
        <circle cx="16" cy="16" r="15" fill="#0e85cd" />
        <path d="M10 9c3-1 5 0 6 2 3-2 6-3 11-2-3 0-4 1-5 2-2 0-4 0-6 2-1-2-3-3-6-4z" fill="#fff" />
        <path d="M2 17c4-1 8 0 10 3 4-3 9-4 14-3-2 1-4 2-5 3-4-1-7 0-10 3-2-3-5-5-9-6z" fill="#fff" />
      </Icon>
    ),
  },
  {
    name: "Epic Pen",
    state: "open",
    icon: (
      <Icon>
        <path d="M0 0h32v32H0z" fill="#ff8c00" />
        <path d="M5 30l2-9L17 7l6 4.500L12.500 26zM18.500 5L21 2.500c2-1.500 7 2 6 4.500l-2.500 3z" fill="#fff" />
      </Icon>
    ),
  },
  {
    name: "Settings",
    state: "",
    icon: (
      <Icon>
        <circle cx="16" cy="16" r="9" fill="none" stroke="#b4b8ae" strokeWidth="7" />
        <circle cx="16" cy="16" r="13.500" fill="none" stroke="#b4b8ae" strokeWidth="3.400" strokeDasharray="6 4.600" />
        <circle cx="16" cy="16" r="10" fill="none" stroke="#d8dad2" strokeWidth="1" />
        <path d="M18 14l9-8M18 19l8 6" stroke="#656565" strokeWidth="1.200" />
        <text x="21" y="19" fill="#333" className="text-[8px] font-bold">
          2
        </text>
      </Icon>
    ),
  },
  {
    name: "GameMaker",
    state: "",
    icon: (
      <Icon>
        <rect width="32" height="32" rx="3" fill="#000" />
        <path d="M3 10h5l3 5M7 16l4 6M12 22h4l5-8M13 10h4M20 12l-2-2-4 7M21 14l5 8h3l-2-5M21 22l3-5" fill="none" stroke="#8fd63c" strokeWidth="3" />
      </Icon>
    ),
  },
  {
    name: "Visual Studio",
    state: "",
    icon: (
      <Icon>
        <path d="M0 9l5-2 7 6L24 0l8 4v24l-8 4-12-13-7 6-5-2z" fill="#fff" />
        <path d="M2 10.500l3-1.200 7 6.200L24 2.500 30 5v22l-6 2.500-12-13-7 6.200-3-1.200z" fill="#68217a" />
        <path d="M5 13v6l3-3zM23.500 10.500v11L16 16z" fill="#fff" />
      </Icon>
    ),
  },
  {
    name: "Speed Monitor",
    state: "",
    icon: (
      <Icon>
        <rect x=".5" y=".5" width="31" height="31" rx="2" fill="#1b86c7" stroke="#8cc8ea" />
        <circle cx="16" cy="16" r="12" fill="none" stroke="#fff" strokeWidth="2" />
        <path d="M8.500 20a8.500 8.500 0 1 1 15 0" fill="none" stroke="#fff" strokeWidth="2.200" />
        <path d="M11.500 18a4.700 4.700 0 0 1 7-5" fill="none" stroke="#fff" strokeWidth="1.800" />
        <circle cx="15.500" cy="18.500" r="2.600" fill="#fff" />
        <path d="M16 18l5-6" stroke="#fff" strokeWidth="2.200" />
      </Icon>
    ),
  },
  {
    name: "Node.js",
    state: "",
    icon: (
      <Icon>
        <ellipse cx="17" cy="30" rx="8" ry="1.500" fill="#8a8a8a" />
        <path d="M16 1l12.500 7v14.500L16 30 3.500 22.500V8z" fill="#78b530" />
        <path d="M16 1l12.500 7v14.500L22 26 10 4.500z" fill="#93cc44" />
        <path d="M10 21v-8.500L16 9l6 3.500V21h-4v-6l-2-1.500-2 1.500v6z" fill="#fff" />
      </Icon>
    ),
  },
  { name: "Terminal", state: "", icon: <Cmd /> },
  {
    name: "Git",
    state: "",
    icon: (
      <Icon>
        <rect x="5" y="5" width="22" height="22" rx="2" transform="rotate(45 16 16)" fill="#f05033" />
        <path d="M11 6l5 5v12M16 12l5 5" stroke="#4a4a4a" strokeWidth="2" fill="none" />
        <circle cx="16" cy="11.500" r="2.400" fill="#4a4a4a" />
        <circle cx="16" cy="23" r="2.400" fill="#4a4a4a" />
        <circle cx="21.500" cy="17" r="2.400" fill="#4a4a4a" />
      </Icon>
    ),
  },
  {
    name: "Paint",
    state: "open",
    icon: (
      <Icon>
        <path d="M3 19C2 10 10 4 18 5c8 1 11 7 9 13-1 4-4 4-6 6s-2 6-8 6S4 25 3 19z" fill="#b9ddf2" stroke="#5f9cc4" />
        <circle cx="14" cy="20" r="2.600" fill="#6b8494" />
        <circle cx="6.500" cy="17" r="2.600" fill="#d8442c" />
        <circle cx="11" cy="11.500" r="2.600" fill="#62b63c" />
        <circle cx="18" cy="9" r="2.600" fill="#f0b428" />
        <circle cx="14" cy="26" r="2.200" fill="#3a78c8" />
        <path d="M17 31l7-20 3 1-7 19z" fill="#e08a3a" stroke="#8f5420" strokeWidth=".7" />
        <path d="M22 3c3-3 7-2 10 0-1 4-3 7-7 8-1-2-2-5-3-8z" fill="#b99a6a" />
      </Icon>
    ),
  },
  {
    name: "Magnifier",
    state: "open",
    icon: (
      <Icon>
        <path d="M5 3l22-1 1 19-23 2z" fill="#e4e8ec" stroke="#9aa2aa" />
        <path d="M7 5l18-1 1 15-19 1z" fill="#1838c8" />
        <path d="M15 4.500l10-.5 1 10-6-2z" fill="#7d9cf0" />
        <path d="M12 27l14-3 4 3-14 4z" fill="#dfe3e7" />
        <circle cx="9" cy="16" r="7" fill="#9cc6ec" fillOpacity=".9" stroke="#cfd8df" strokeWidth="1.500" />
        <path d="M13 21l7 9" stroke="#8d5f48" strokeWidth="3.200" />
      </Icon>
    ),
  },
];

function Taskbar() {
  return (
    <footer className="flex h-10 shrink-0 border-t border-[#4e4e4e] bg-[#646464]">
      <button aria-label="Start" className="flex w-[49px] shrink-0 items-center justify-center">
        <svg width="27" height="26">
          <path d="M0 3.800l11.500-1.700v10.400H0zM12.500 1.900L27 0v12.500H12.500zM0 13.500h11.500v10.400L0 22.200zM12.500 13.500H27V26l-14.500-2z" fill="#fff" />
        </svg>
      </button>
      <div className="flex min-w-0 flex-1">
        {APPS.map((a) => (
          <button
            key={a.name}
            aria-label={a.name}
            className={
              a.state === "open"
                ? "mx-[2px] flex min-w-0 flex-1 items-center justify-center border border-[#b0b0b0] bg-[#838383]"
                : a.state === "active"
                  ? "mx-[2px] flex min-w-0 flex-1 items-center justify-center border border-r-4 border-[#d8d8d8] border-r-[#b8b8b8] bg-[#a6a6a6]"
                  : "mx-[2px] flex min-w-0 flex-1 items-center justify-center border border-transparent"
            }
          >
            {a.icon}
          </button>
        ))}
      </div>
      <div className="flex w-[340px] shrink-0 items-center pl-[5px] text-[11px] leading-[17px] text-white">
        <button aria-label="Touch keyboard" className="flex w-11 justify-center">
          <svg width="30" height="19">
            <rect x="1" y="1" width="28" height="17" rx="1" fill="none" stroke="#fff" strokeWidth="2" />
            <path d="M4 5.500h22M4 9.500h22" stroke="#fff" strokeWidth="3" strokeDasharray="3 1" />
            <path d="M4 14h3M8 14h14M23 14h3" stroke="#fff" strokeWidth="3" />
          </svg>
        </button>
        <button aria-label="Help notification" className="flex w-11 justify-center">
          <svg width="32" height="32">
            <circle cx="13" cy="18" r="12.500" fill="#0b2f66" stroke="#2b6cb8" />
            <text x="12" y="28" textAnchor="middle" fill="#fff" className="text-[27px] font-bold">
              ?
            </text>
            <circle cx="22" cy="10" r="9" fill="#e0a50c" stroke="#b37c06" />
            <path d="M22 3.500v7.500" stroke="#fff" strokeWidth="3.400" />
            <circle cx="22" cy="14.500" r="1.900" fill="#fff" />
          </svg>
        </button>
        <button aria-label="Show hidden icons" className="flex w-[23px] justify-center pt-[3px]">
          <svg width="8" height="4">
            <path d="M0 4h8L4 0z" fill="#fff" />
          </svg>
        </button>
        <button aria-label="Power" className="flex w-[26px] justify-center">
          <svg width="16" height="16">
            <path d="M2 0v4M5 0v4M3.500 8v7" stroke="#fff" strokeWidth="1.300" />
            <path d="M.5 4h6v3c0 2-6 2-6 0z" fill="#fff" />
            <rect x="8" y="2.500" width="6.500" height="12" fill="none" stroke="#fff" strokeWidth="1.400" />
            <path d="M10 1h3" stroke="#fff" strokeWidth="1.500" />
            <path d="M11.200 7v5.500" stroke="#fff" strokeWidth="3" />
          </svg>
        </button>
        <button aria-label="Action Center" className="flex w-6 justify-center">
          <svg width="15" height="15">
            <path d="M1.500 0v15" stroke="#fff" strokeWidth="1.500" />
            <path d="M3 1h6v2h5l-1.500 3L14 8H8V7H3z" fill="#fff" />
          </svg>
        </button>
        <button aria-label="Network" className="flex w-6 justify-center">
          <svg width="15" height="13">
            <path d="M1.500 10v3M4.500 8v5M7.500 5.500V13M10.500 3v10M13.500 0v13" stroke="#fff" strokeWidth="2" />
          </svg>
        </button>
        <button aria-label="Volume" className="flex w-6 justify-center">
          <svg width="14" height="14">
            <path d="M0 4.500h3l4-4v13l-4-4H0z" fill="#fff" />
            <path d="M9 4.500q1.500 2.500 0 5M11 2.500q3 4.500 0 9" fill="none" stroke="#fff" strokeWidth="1.200" />
          </svg>
        </button>
        <div className="w-11 text-center">
          ENG
          <br />
          US
        </div>
        <div className="w-[72px] text-center whitespace-nowrap">
          11:03 AM
          <br />
          2015-05-21
        </div>
      </div>
    </footer>
  );
}

export default function App() {
  return (
    <div className="relative flex h-screen flex-col overflow-hidden bg-[#646464] font-['Open_Sans','Noto_Sans',sans-serif] text-black">
      <div className="relative grid min-h-0 flex-1 grid-cols-2 grid-rows-[minmax(0,1fr)]">
        <Browser />
        <Writer />
        <EpicPen />
      </div>
      <Taskbar />
      <Magnifier />
    </div>
  );
}
